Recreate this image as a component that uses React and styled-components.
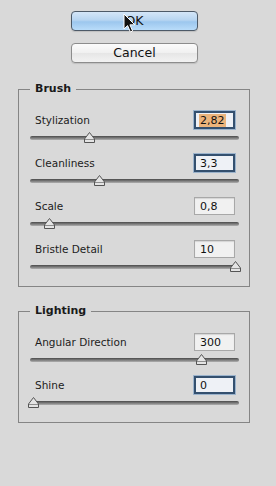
import React from "react";
import styled, { createGlobalStyle } from "styled-components";

const GlobalStyle = createGlobalStyle`
  html, body {
    margin: 0;
    padding: 0;
    background: #d9d9d9;
  }
  body {
    font-family: "DejaVu Sans", "Liberation Sans", sans-serif;
    color: #1c1c1c;
  }
`;

const brush = [
  { label: "Stylization", value: "2,82", frac: 0.282, focus: "selected" },
  { label: "Cleanliness", value: "3,3", frac: 0.33, focus: "dark" },
  { label: "Scale", value: "0,8", frac: 0.08 },
  { label: "Bristle Detail", value: "10", frac: 1 },
];

const lighting = [
  { label: "Angular Direction", value: "300", frac: 300 / 360 },
  { label: "Shine", value: "0", frac: 0, focus: "dark" },
];

function Cursor() {
  return (
    <CursorIcon width="14" height="21" viewBox="0 0 14 21">
      <path
        d="M1 1 L1 16 L4.6 12.6 L7.4 19 L9.6 18 L6.9 11.8 L11.8 11.8 Z"
        fill="#111"
        stroke="#fff"
        strokeWidth="1"
        strokeLinejoin="round"
      />
    </CursorIcon>
  );
}

function Thumb({ frac }) {
  return (
    <ThumbIcon
      width="13"
      height="13"
      viewBox="0 0 13 13"
      style={{ left: 3 + frac * 202 - 6.5 }}
    >
      <path
        d="M1.5 11.5 L1.5 8 L6.5 1.5 L11.5 8 L11.5 11.5 Z"
        fill="#e4e4e4"
        stroke="#555"
        strokeWidth="1"
        strokeLinejoin="round"
      />
      <path d="M2 8.5 L11 8.5" stroke="#8e8e8e" strokeWidth="1" />
    </ThumbIcon>
  );
}

function Setting({ label, value, frac, focus }) {
  return (
    <Row>
      <Head>
        <Label>{label}</Label>
        <ValueBox $focus={focus}>
          {focus === "selected" ? <Selection>{value}</Selection> : value}
        </ValueBox>
      </Head>
      <Slider>
        <Track />
        <Thumb frac={frac} />
      </Slider>
    </Row>
  );
}

export default function App() {
  return (
    <Page>
      <GlobalStyle />
      <Buttons>
        <Button $primary>
          OK
          <Cursor />
        </Button>
        <Button>Cancel</Button>
      </Buttons>
      <Group>
        <Legend>Brush</Legend>
        {brush.map((s) => (
          <Setting key={s.label} {...s} />
        ))}
      </Group>
      <Group>
        <Legend>Lighting</Legend>
        {lighting.map((s) => (
          <Setting key={s.label} {...s} />
        ))}
      </Group>
    </Page>
  );
}

const Page = styled.div`
  width: 276px;
  height: 486px;
  padding-top: 11px;
  box-sizing: border-box;
  display: flex;
  flex-direction: column;
`;

const Buttons = styled.div`
  display: flex;
  flex-direction: column;
  gap: 12px;
  padding-left: 71px;
  margin-bottom: 19px;
`;

const Button = styled.div`
  position: relative;
  width: 127px;
  height: 20px;
  box-sizing: border-box;
  border-radius: 4px;
  border: 1px solid ${(p) => (p.$primary ? "#4d5a68" : "#8c8c8c")};
  background: ${(p) =>
    p.$primary
      ? "linear-gradient(#d4e6f8 0%, #b7d5f1 45%, #9cc7ee 55%, #b9dcfa 100%)"
      : "linear-gradient(#fbfbfb 0%, #f0f0f0 50%, #e6e6e6 51%, #f2f2f2 100%)"};
  box-shadow: 0 1px 1px rgba(0, 0, 0, 0.12);
  display: flex;
  align-items: center;
  justify-content: center;
  font-size: 12.5px;
  color: #111;
  line-height: 1;
`;

const CursorIcon = styled.svg`
  position: absolute;
  left: 51px;
  top: 1px;
`;

const Group = styled.fieldset`
  margin: 0 0 17px 18px;
  width: 232px;
  box-sizing: border-box;
  border: 1px solid #858585;
  padding: 15px 10px 12px 11px;
  min-width: 0;
  display: flex;
  flex-direction: column;
  gap: 9px;
`;

const Legend = styled.legend`
  padding: 0 5px;
  margin: 0;
  font-size: 11px;
  font-weight: bold;
  line-height: 14px;
  color: #1a1a1a;
`;

const Row = styled.div`
  display: flex;
  flex-direction: column;
  gap: 2px;
`;

const Head = styled.div`
  display: flex;
  align-items: center;
  justify-content: space-between;
  padding: 0 4px 0 5px;
  height: 18px;
`;

const Label = styled.span`
  font-size: 10.5px;
  color: #1c1c1c;
`;

const ValueBox = styled.div`
  width: 41px;
  height: 18px;
  box-sizing: border-box;
  border: ${(p) => (p.$focus ? "2px solid #34506f" : "1px solid #a8a8a8")};
  background: ${(p) => (p.$focus ? "#eef1f6" : "#f1f1f1")};
  box-shadow: ${(p) =>
    p.$focus ? "0 0 0 1px #9bb3cc" : "inset 0 1px 1px rgba(0,0,0,0.12)"};
  display: flex;
  align-items: center;
  padding-left: ${(p) => (p.$focus ? "4px" : "5px")};
  font-size: 11px;
  color: #111;
`;

const Selection = styled.span`
  background: #ebb47c;
  padding: 0 1px;
  margin-left: -1px;
  line-height: 13px;
`;

const Slider = styled.div`
  position: relative;
  height: 14px;
  display: flex;
  align-items: center;
`;

const Track = styled.div`
  width: 209px;
  height: 4px;
  border-radius: 2px;
  background: linear-gradient(#4a4a4a, #858585 60%, #b0b0b0);
`;

const ThumbIcon = styled.svg`
  position: absolute;
  top: 0px;
`;
